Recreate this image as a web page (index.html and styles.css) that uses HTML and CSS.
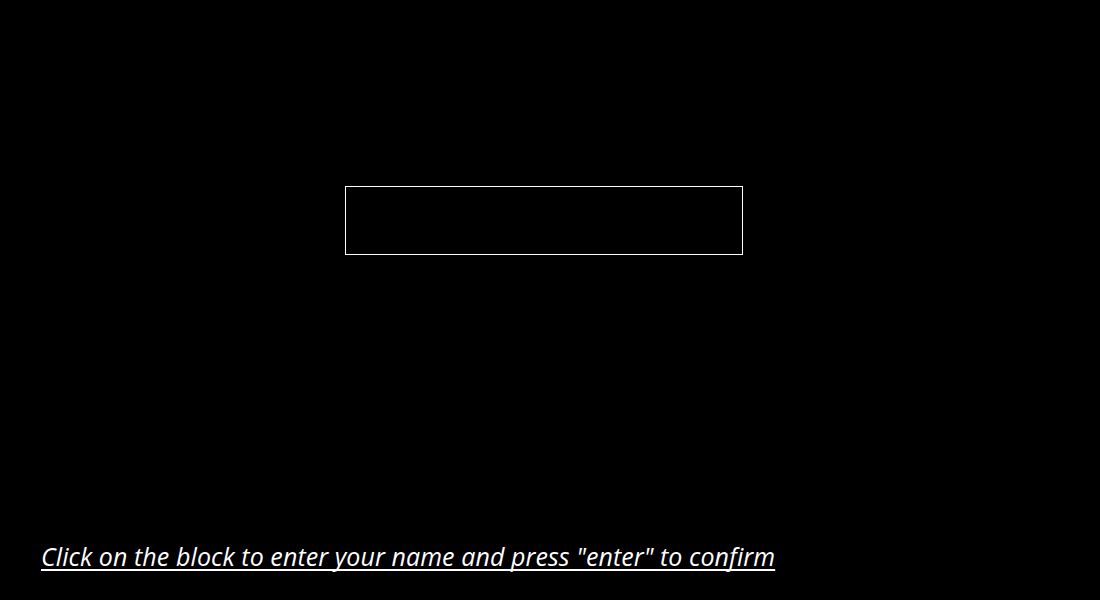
FILE: index.html
```html
<!DOCTYPE html>
<html>
<head>
<meta charset="utf-8">
<link rel="stylesheet" href="styles.css">
</head>
<body>
<div class="page">
  <div class="stage">
    <div class="name-block"></div>
  </div>
  <p class="hint">Click on the block to enter your name and press "enter" to confirm</p>
</div>
</body>
</html>
```
FILE: styles.css
```css
html, body {
  margin: 0;
  padding: 0;
  background: #000;
  height: 100%;
}
.page {
  height: 600px;
  display: flex;
  flex-direction: column;
  overflow: hidden;
}
.stage {
  padding-top: 186px;
  padding-left: 345px;
  flex: 1;
}
.name-block {
  width: 396px;
  height: 67px;
  border: 1px solid #fff;
}
.hint {
  margin: 0 0 29px 41px;
  font-family: "Open Sans", Lato, sans-serif;
  font-style: italic;
  font-size: 25px;
  letter-spacing: 0.08px;
  line-height: 30px;
  color: #fff;
  text-decoration: underline;
  text-decoration-thickness: 2px;
  text-underline-offset: 3px;
  text-decoration-skip-ink: none;
  white-space: nowrap;
}
```
